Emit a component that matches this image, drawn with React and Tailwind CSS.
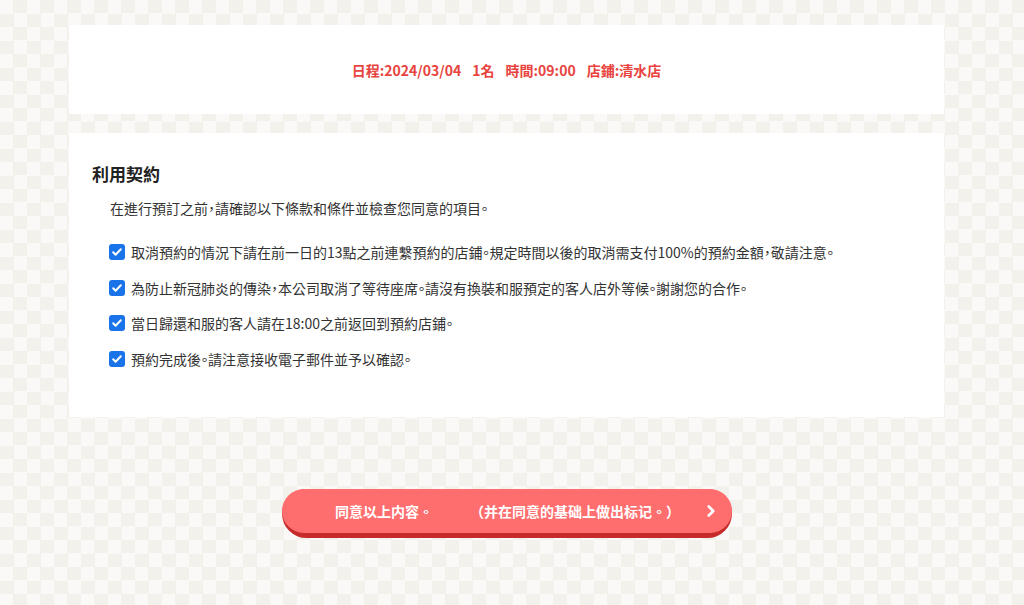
import { FiChevronRight } from "react-icons/fi";

const terms = [
  "取消預約的情況下請在前一日的13點之前連繫預約的店鋪。規定時間以後的取消需支付100%的預約金額，敬請注意。",
  "為防止新冠肺炎的傳染，本公司取消了等待座席。請沒有換裝和服預定的客人店外等候。謝謝您的合作。",
  "當日歸還和服的客人請在18:00之前返回到預約店鋪。",
  "預約完成後。請注意接收電子郵件並予以確認。",
];

function Check() {
  return (
    <span className="flex h-[16px] w-[16px] shrink-0 items-center justify-center rounded-[3px] bg-[#1a73e8]">
      <svg viewBox="0 0 12 12" className="h-[12px] w-[12px]">
        <path d="M2.2 6.3l2.4 2.4 5.2-5.4" fill="none" stroke="white" strokeWidth="2" strokeLinecap="round" strokeLinejoin="round" />
      </svg>
    </span>
  );
}

export default function App() {
  return (
    <div
      className="min-h-[605px] w-full bg-[#f3f2ee] bg-[conic-gradient(#f3f1ec_25%,#faf9f7_0_50%,#f3f1ec_0_75%,#faf9f7_0)] bg-[length:27px_27px] pt-[25px] text-[#333]"
      style={{ fontFamily: '"Noto Sans CJK TC", "Noto Sans", sans-serif' }}
    >
      <div className="ml-[69px] flex w-[875px] flex-col gap-[19px]">
        <section className="flex h-[89px] items-center justify-center bg-white">
          <p className="flex gap-[11px] pt-[2px] text-[14px] font-bold text-[#e8443f] [font-feature-settings:'halt']">
            <span>日程:2024/03/04</span>
            <span>1名</span>
            <span>時間:09:00</span>
            <span>店鋪:清水店</span>
          </p>
        </section>

        <section className="h-[284px] bg-white px-[23px] pt-[28px] [font-feature-settings:'halt']">
          <h2 className="text-[17px] font-bold leading-[25px] text-[#222]">利用契約</h2>
          <p className="mt-[12px] pl-[18px] text-[14px] leading-[20px]">
            在進行預訂之前，請確認以下條款和條件並檢查您同意的項目。
          </p>
          <ul className="mt-[24px] flex flex-col gap-[15.5px] pl-[17px]">
            {terms.map((t) => (
              <li key={t} className="flex items-center gap-[6px] text-[14px] leading-[20px]">
                <Check />
                <span>{t}</span>
              </li>
            ))}
          </ul>
        </section>
      </div>

      <div className="ml-[282px] mt-[72px] w-[450px]">
        <button className="flex h-[49px] w-full items-center rounded-full bg-[#c62a2a] pb-[5px]">
          <span className="flex h-[44px] w-full items-center rounded-full bg-[#ff6e6e] pl-[53px] pr-[12px] text-[14px] font-bold text-white">
            <span>同意以上内容。</span>
            <span className="ml-[37px]">（并在同意的基础上做出标记。）</span>
            <FiChevronRight className="ml-auto h-[18px] w-[18px]" strokeWidth={3.5} />
          </span>
        </button>
      </div>
    </div>
  );
}
